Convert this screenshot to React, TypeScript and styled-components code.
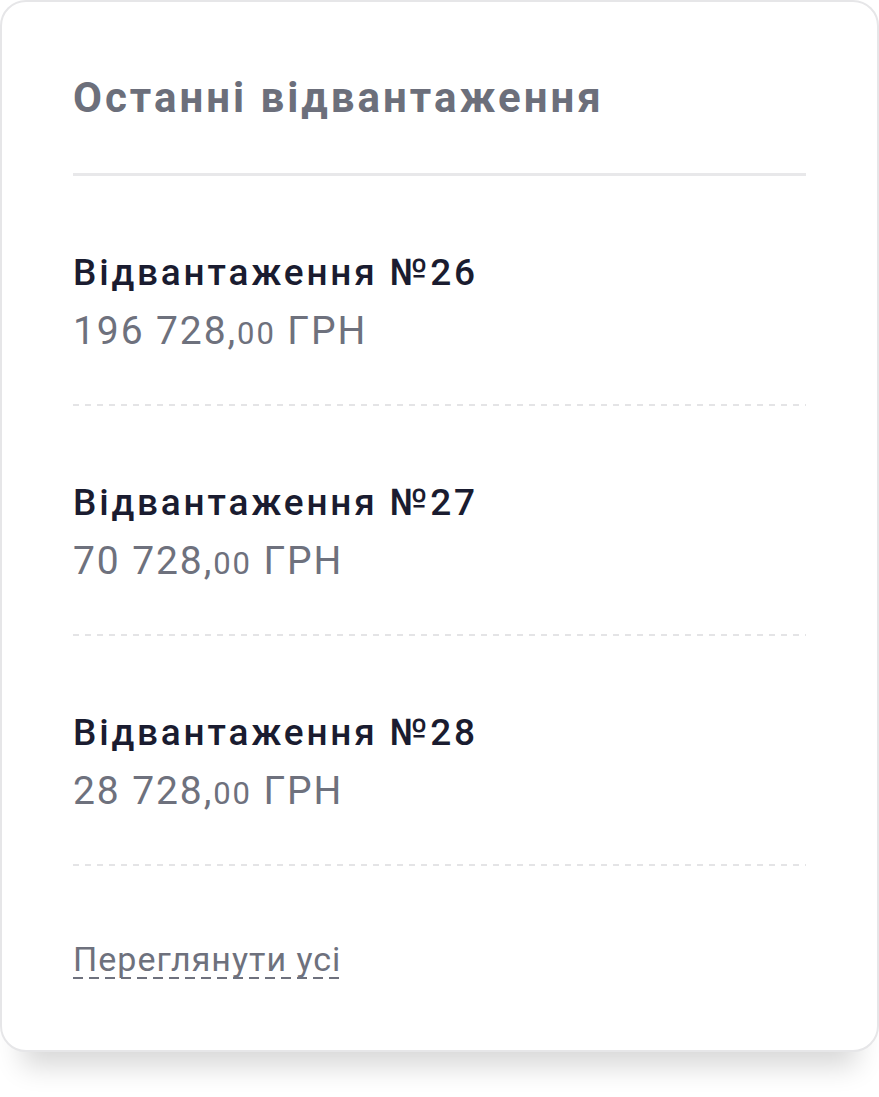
import React from "react";
import styled, { createGlobalStyle } from "styled-components";

const GlobalStyle = createGlobalStyle`
  html, body {
    margin: 0;
    padding: 0;
    background: #ffffff;
    font-family: Roboto, "Noto Sans", "Liberation Sans", sans-serif;
  }
`;

const Page = styled.div`
  min-height: 1097px;
  padding-bottom: 46px;
  box-sizing: border-box;
`;

const Card = styled.div`
  box-sizing: border-box;
  width: 879px;
  border: 2px solid #e6e6e8;
  border-radius: 26px;
  background: #fff;
  padding: 72px 71px 71px;
  box-shadow: 0 36px 28px -22px rgba(0, 0, 0, 0.16);
`;

const Title = styled.h2`
  margin: 0;
  font-size: 42px;
  line-height: 48px;
  font-weight: 700;
  color: #6c6f7b;
  letter-spacing: 3px;
`;

const Divider = styled.div`
  height: 3px;
  margin-top: 51px;
  background: #e8e8ea;
`;

const List = styled.div`
  display: flex;
  flex-direction: column;
`;

const Item = styled.div`
  padding: 75px 0 50px;
  display: flex;
  flex-direction: column;
  gap: 14px;
  background-image: repeating-linear-gradient(
    90deg,
    #e4e4e6 0 6px,
    transparent 6px 12px
  );
  background-size: 100% 2px;
  background-repeat: no-repeat;
  background-position: left bottom;
`;

const ItemName = styled.div`
  font-size: 37px;
  line-height: 44px;
  font-weight: 500;
  color: #1a1c30;
  letter-spacing: 2.8px;
`;

const Amount = styled.div`
  font-size: 39px;
  line-height: 44px;
  font-weight: 400;
  color: #6e717d;
  letter-spacing: 1.9px;
`;

const Cents = styled.span`
  font-size: 31px;
`;

const ViewAll = styled.a`
  display: inline-block;
  margin-top: 73px;
  font-size: 34px;
  line-height: 40px;
  color: #6e717d;
  letter-spacing: 1px;
  text-decoration: none;
  background-image: repeating-linear-gradient(
    90deg,
    #6e717d 0 10px,
    transparent 10px 16px
  );
  background-size: 100% 2px;
  background-repeat: no-repeat;
  background-position: left bottom;
  cursor: pointer;
`;

const shipments = [
  { id: 26, whole: "196 728", cents: "00" },
  { id: 27, whole: "70 728", cents: "00" },
  { id: 28, whole: "28 728", cents: "00" },
];

const App = () => {
  return (
    <Page>
      <GlobalStyle />
      <Card>
        <Title>Останні відвантаження</Title>
        <Divider />
        <List>
          {shipments.map((s) => (
            <Item key={s.id}>
              <ItemName>Відвантаження №{s.id}</ItemName>
              <Amount>
                {s.whole},<Cents>{s.cents}</Cents> ГРН
              </Amount>
            </Item>
          ))}
        </List>
        <ViewAll>Переглянути усі</ViewAll>
      </Card>
    </Page>
  );
};

export default App;
